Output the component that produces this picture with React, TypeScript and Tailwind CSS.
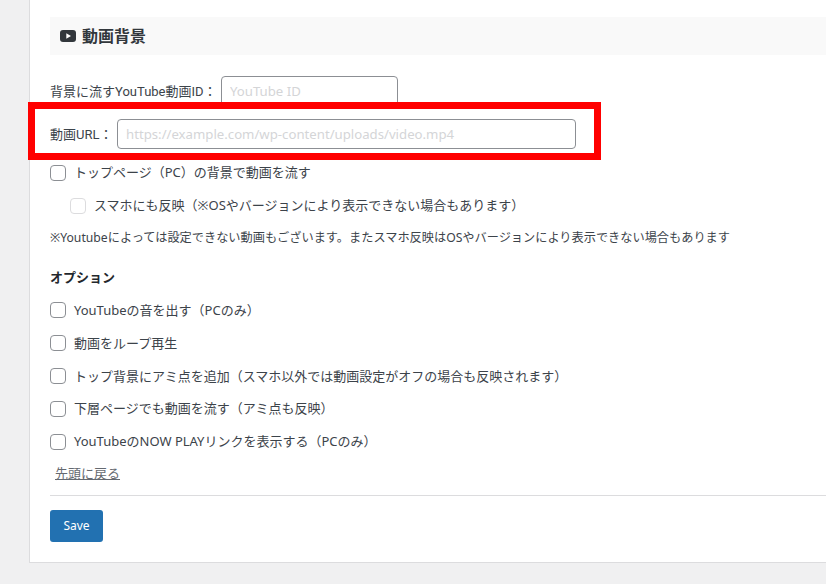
import React from "react";

function Check({ label, faded }: { label: string; faded?: boolean }) {
  return (
    <label className="flex items-center h-[32.8px]">
      <span
        className={
          faded
            ? "w-4 h-4 mt-[1px] rounded-[4px] border border-[#dcdcde] bg-white shrink-0 mr-[8px]"
            : "w-4 h-4 mt-[1px] rounded-[4px] border border-[#8c8f94] bg-white shrink-0 mr-[8px]"
        }
      />
      <span className="text-[13px] leading-[20px] text-[#3c434a] whitespace-nowrap">{label}</span>
    </label>
  );
}

export default function App() {
  return (
    <div className="w-[826px] h-[584px] overflow-hidden bg-[#f0f0f1] relative font-['Noto_Sans','Noto_Sans_CJK_JP',sans-serif]">
      <div className="ml-[29px] w-[900px] h-[563px] bg-white border-l border-b border-[#dcdcde] pl-[20px] pt-[17px] box-border">
        <div className="h-[38px] bg-[#f9f9f9] flex items-center pl-[10px]">
          <svg width="16" height="12" viewBox="0 0 16 12" className="mr-[6px]">
            <rect x="0" y="0" width="16" height="12" rx="3" fill="#32373c" />
            <path d="M6.3 3.2 L11 6 L6.3 8.8 Z" fill="#fff" />
          </svg>
          <span className="text-[16px] font-bold text-[#32373c]">動画背景</span>
        </div>

        <div className="flex items-center mt-[21px] h-[30px]">
          <span className="w-[171px] shrink-0 pt-[1px] text-[13px] text-[#3c434a] whitespace-nowrap font-['Roboto','Noto_Sans_CJK_JP',sans-serif]">背景に流すYouTube動画ID：</span>
          <input
            readOnly
            placeholder="YouTube ID"
            className="w-[177px] h-[30px] border border-[#8c8f94] rounded-[4px] px-[8px] text-[13.2px] placeholder:text-[#d4d5d7] bg-white"
          />
        </div>
        <div className="flex items-center mt-[13px] h-[30px]">
          <span className="w-[67px] shrink-0 pt-[1px] text-[13px] text-[#3c434a] whitespace-nowrap font-['Roboto','Noto_Sans_CJK_JP',sans-serif]">動画URL：</span>
          <input
            readOnly
            placeholder="https://example.com/wp-content/uploads/video.mp4"
            className="w-[459px] h-[30px] border border-[#8c8f94] rounded-[4px] px-[8px] text-[13.2px] placeholder:text-[#d4d5d7] bg-white"
          />
        </div>

        <div className="mt-[7px]">
          <Check label="トップページ（PC）の背景で動画を流す" />
          <div className="ml-[20px]">
            <Check faded label="スマホにも反映（※OSやバージョンにより表示できない場合もあります）" />
          </div>
        </div>
        <p className="text-[12.2px] leading-[20px] text-[#3c434a] mt-[6px] whitespace-nowrap">
          ※Youtubeによっては設定できない動画もございます。またスマホ反映はOSやバージョンにより表示できない場合もあります
        </p>

        <h3 className="text-[13px] font-bold text-[#23282d] mt-[19px] leading-[20px]">オプション</h3>
        <div className="mt-[7px]">
          <Check label="YouTubeの音を出す（PCのみ）" />
          <Check label="動画をループ再生" />
          <Check label="トップ背景にアミ点を追加（スマホ以外では動画設定がオフの場合も反映されます）" />
          <Check label="下層ページでも動画を流す（アミ点も反映）" />
          <Check label="YouTubeのNOW PLAYリンクを表示する（PCのみ）" />
        </div>
        <a className="block ml-[5px] mt-[5px] text-[13px] leading-[20px] text-[#646970] underline">先頭に戻る</a>
        <hr className="border-0 border-t border-[#dcdcde] mt-[12px]" />
        <button className="mt-[14px] w-[53px] h-[32px] pt-[1px] bg-[#2271b1] rounded-[3px] text-white text-[12px]">Save</button>
      </div>
      <div className="absolute left-[28px] top-[102px] w-[573px] h-[58px] border-[7px] border-[#ff0000]" />
    </div>
  );
}
